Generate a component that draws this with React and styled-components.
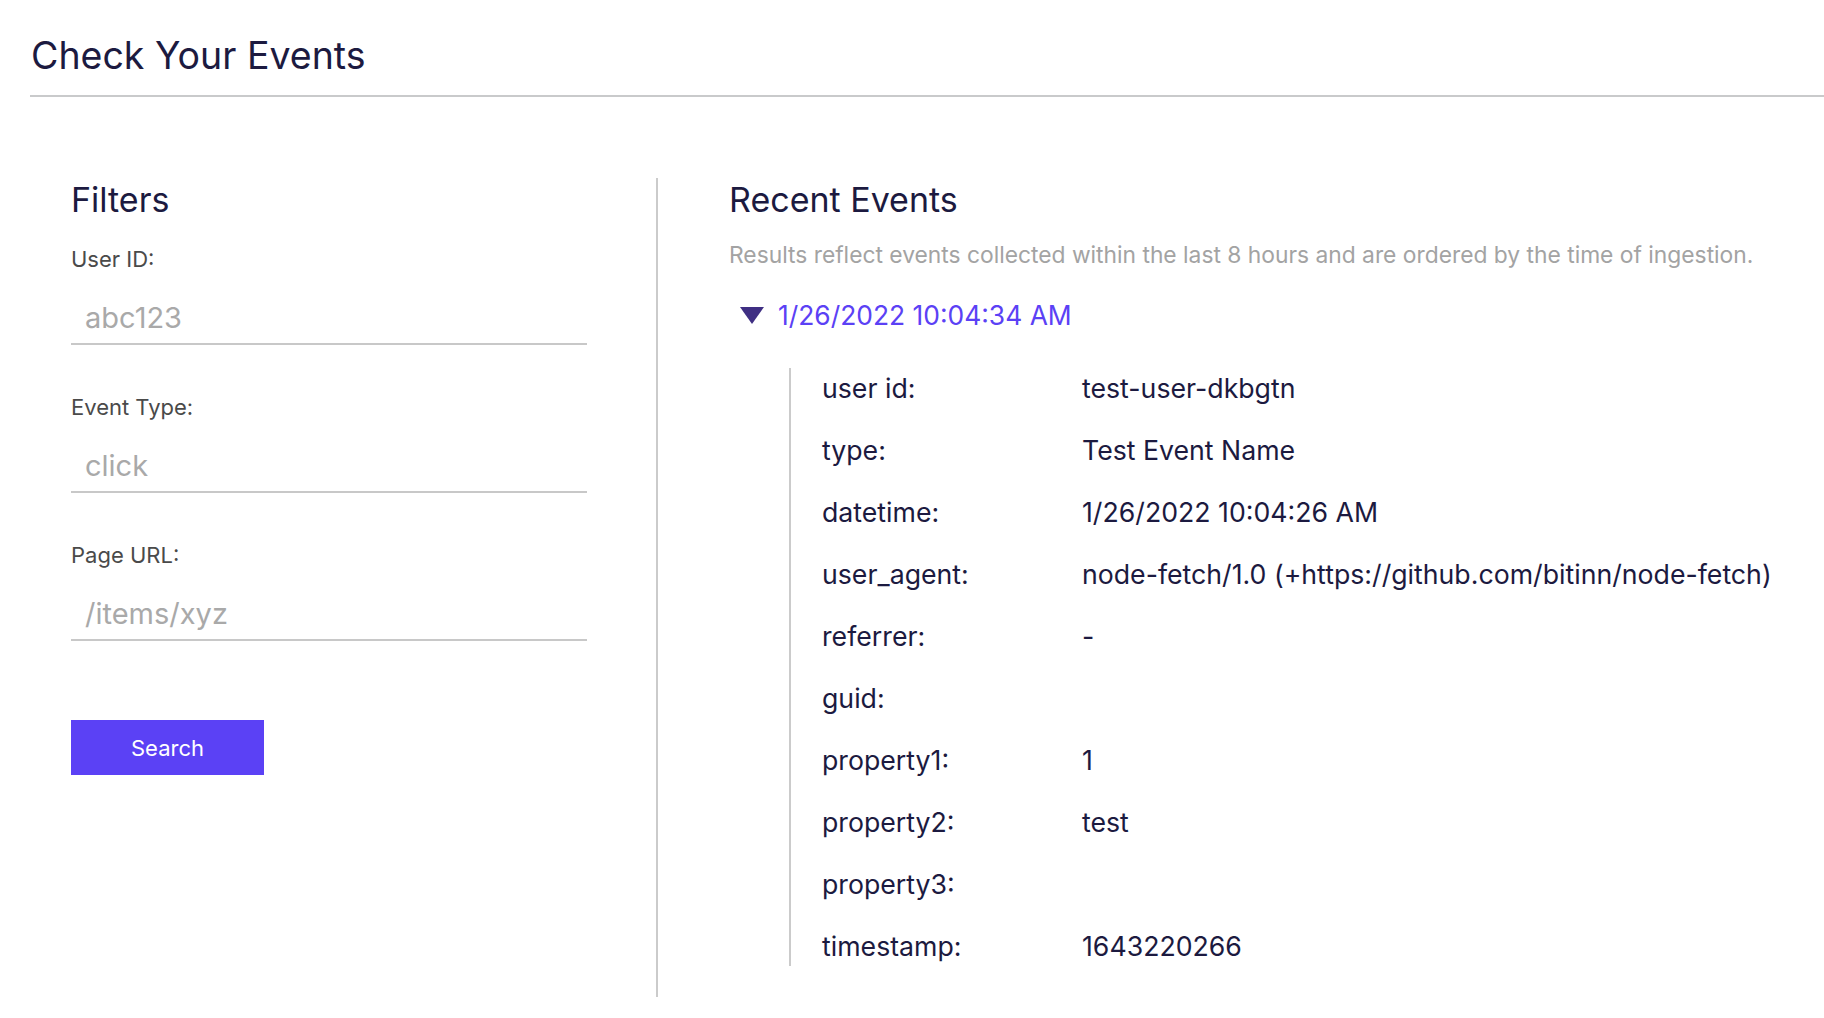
import React from "react";
import styled, { createGlobalStyle } from "styled-components";

const GlobalStyle = createGlobalStyle`
  html, body {
    margin: 0;
    padding: 0;
    background: #ffffff;
  }
  body {
    font-family: "Inter", "Liberation Sans", sans-serif;
    color: #1c1a40;
  }
`;

const Page = styled.div`
  padding-left: 30px;
`;

const Header = styled.header`
  height: 95px;
  border-bottom: 2px solid #c9cacb;
  display: flex;
  align-items: center;
  h1 {
    margin: 0;
    padding-left: 1px;
    font-size: 37.5px;
    font-weight: 400;
    color: #1c1a40;
    margin-top: 16px;
  }
`;

const Main = styled.main`
  display: flex;
  padding-top: 81px;
`;

const FilterPanel = styled.section`
  width: 628px;
  padding-left: 41px;
  border-right: 2px solid #cbcbcb;
  min-height: 819px;
  box-sizing: border-box;
`;

const SectionTitle = styled.h2`
  margin: 0;
  font-size: 34px;
  font-weight: 400;
  color: #1c1a40;
  line-height: 44px;
`;

const Field = styled.label`
  display: block;
  width: 516px;
  margin-top: ${(p) => (p.first ? "22px" : "47px")};
`;

const FieldLabel = styled.span`
  display: block;
  font-size: 22px;
  color: #4a4a4a;
  line-height: 30px;
`;

const TextInput = styled.input`
  display: block;
  width: 100%;
  box-sizing: border-box;
  margin-top: 23px;
  border: none;
  border-bottom: 2px solid #c8c8c8;
  padding: 0 0 6px 14px;
  height: 48px;
  font-family: inherit;
  font-size: 29px;
  color: #1c1a40;
  outline: none;
  &::placeholder {
    color: #a9a9a9;
  }
`;

const SearchButton = styled.button`
  margin-top: 79px;
  width: 193px;
  height: 55px;
  border: none;
  background: #5b41f5;
  color: #ffffff;
  font-family: inherit;
  font-size: 22px;
  cursor: pointer;
`;

const EventsPanel = styled.section`
  flex: 1;
  padding-left: 71px;
`;

const Note = styled.p`
  margin: 18px 0 0;
  font-size: 22.8px;
  color: #a3a3a3;
  line-height: 30px;
`;

const EventSummary = styled.div`
  display: flex;
  align-items: center;
  gap: 14px;
  margin-top: 25px;
  padding-left: 11px;
  font-size: 26.4px;
  color: #5b41f5;
  line-height: 40px;
`;

const Caret = styled.span`
  width: 0;
  height: 0;
  border-left: 12px solid transparent;
  border-right: 12px solid transparent;
  border-top: 17px solid #3f2f83;
`;

const DetailList = styled.dl`
  margin: 33px 0 0 60px;
  padding-left: 31px;
  border-left: 2px solid #cbcbcb;
  display: flex;
  flex-direction: column;
  gap: 22px;
`;

const DetailRow = styled.div`
  display: grid;
  grid-template-columns: 260px 1fr;
  font-size: 26.7px;
  line-height: 40px;
  color: #1c1a40;
  dt,
  dd {
    margin: 0;
  }
`;

const details = [
  ["user id:", "test-user-dkbgtn"],
  ["type:", "Test Event Name"],
  ["datetime:", "1/26/2022 10:04:26 AM"],
  ["user_agent:", "node-fetch/1.0 (+https://github.com/bitinn/node-fetch)"],
  ["referrer:", "-"],
  ["guid:", ""],
  ["property1:", "1"],
  ["property2:", "test"],
  ["property3:", ""],
  ["timestamp:", "1643220266"],
];

export default function App() {
  return (
    <Page>
      <GlobalStyle />
      <Header>
        <h1>Check Your Events</h1>
      </Header>
      <Main>
        <FilterPanel>
          <SectionTitle>Filters</SectionTitle>
          <Field first>
            <FieldLabel>User ID:</FieldLabel>
            <TextInput placeholder="abc123" />
          </Field>
          <Field>
            <FieldLabel>Event Type:</FieldLabel>
            <TextInput placeholder="click" />
          </Field>
          <Field>
            <FieldLabel>Page URL:</FieldLabel>
            <TextInput placeholder="/items/xyz" />
          </Field>
          <SearchButton>Search</SearchButton>
        </FilterPanel>
        <EventsPanel>
          <SectionTitle>Recent Events</SectionTitle>
          <Note>
            Results reflect events collected within the last 8 hours and are
            ordered by the time of ingestion.
          </Note>
          <EventSummary>
            <Caret />
            1/26/2022 10:04:34 AM
          </EventSummary>
          <DetailList>
            {details.map(([k, v]) => (
              <DetailRow key={k}>
                <dt>{k}</dt>
                <dd>{v}</dd>
              </DetailRow>
            ))}
          </DetailList>
        </EventsPanel>
      </Main>
    </Page>
  );
}
